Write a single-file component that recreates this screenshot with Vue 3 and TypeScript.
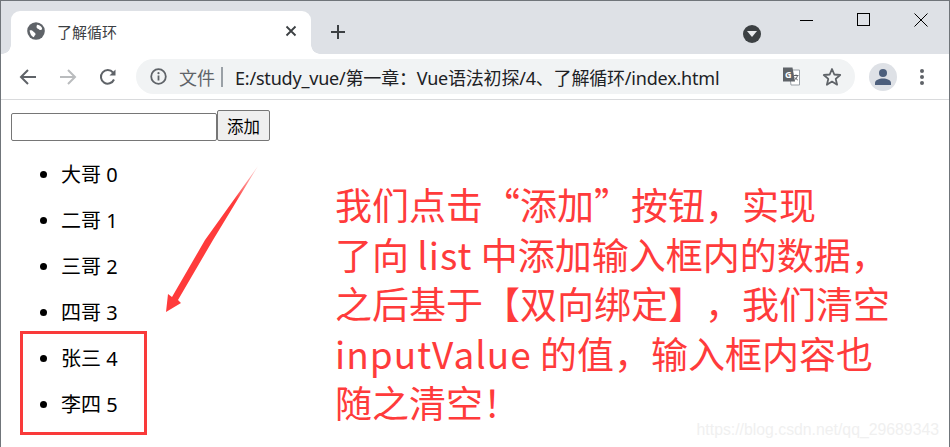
<script setup lang="ts">
const items = ['大哥 0', '二哥 1', '三哥 2', '四哥 3', '张三 4', '李四 5']
</script>

<template>
  <div class="window">
    <div class="tabstrip">
      <div class="tab">
        <svg class="globe" width="18" height="18" viewBox="0 0 18 18">
          <circle cx="9" cy="9" r="8.800" fill="#5f6368" />
          <path d="M10 2.800c1.800.1 3.600 1 4.600 2.500.8 1.200.7 2.500-.6 2.700-1.500.2-2.200-1-3.200-1.300-.9-.3-1.500-1.500-1.200-2.500zM2.600 8.500c1.300-.6 2.700 0 3.700 1 1 1 2.200 1.300 2.200 2.700 0 1-.9 1.200-1.300 2.300-.2.500-.5.900-1 .6-2-1.200-3.300-3.700-3.600-6.600z" fill="#fff" />
        </svg>
        <span class="tab-title">了解循环</span>
        <svg class="tab-close" width="12" height="12" viewBox="0 0 12 12">
          <path d="M1.500 1.500l9 9M10.500 1.500l-9 9" stroke="#3c4043" stroke-width="1.800" fill="none" />
        </svg>
      </div>
      <svg class="new-tab" width="16" height="16" viewBox="0 0 16 16">
        <path d="M8 1v14M1 8h14" stroke="#3c4043" stroke-width="2" fill="none" />
      </svg>
      <div class="strip-spacer"></div>
      <div class="profile-drop"><span></span></div>
      <div class="win-controls">
        <svg width="14" height="14" viewBox="0 0 14 14"><path d="M0 7.500h13" stroke="#000" fill="none" /></svg>
        <svg width="14" height="14" viewBox="0 0 14 14"><rect x=".5" y=".5" width="12" height="12" stroke="#000" fill="none" /></svg>
        <svg width="14" height="14" viewBox="0 0 14 14"><path d="M.5.500l13 13M13.500.500l-13 13" stroke="#000" fill="none" /></svg>
      </div>
    </div>

    <div class="toolbar">
      <svg class="nav" width="18" height="18" viewBox="0 0 18 18">
        <path d="M17 9H2M9 2 2 9l7 7" stroke="#5f6368" stroke-width="2" fill="none" />
      </svg>
      <svg class="nav" width="18" height="18" viewBox="0 0 18 18">
        <path d="M1 9h15M9 2l7 7-7 7" stroke="#babcbe" stroke-width="2" fill="none" />
      </svg>
      <svg class="nav" width="18" height="18" viewBox="0 0 18 18">
        <path d="M15 11.500A6.800 6.800 0 1 1 14 4.500" stroke="#5f6368" stroke-width="2" fill="none" />
        <path d="M16.500 1.500v6h-6z" fill="#5f6368" />
      </svg>
      <div class="omnibox">
        <svg class="info" width="17" height="17" viewBox="0 0 17 17">
          <circle cx="8.500" cy="8.500" r="7.300" stroke="#5f6368" stroke-width="1.800" fill="none" />
          <path d="M8.500 7.500v5" stroke="#5f6368" stroke-width="1.800" />
          <circle cx="8.500" cy="5.200" r="1.100" fill="#5f6368" />
        </svg>
        <span class="scheme">文件</span>
        <span class="sep"></span>
        <span class="url">E:/study_vue/第一章：Vue语法初探/4、了解循环/index.html</span>
        <svg class="translate" width="19" height="19" viewBox="0 0 19 19">
          <path d="M7 3h10.500v15H9z" fill="#fff" stroke="#9aa0a6" />
          <path d="M1 .500h9.500L13 14.500H1z" fill="#5f6368" />
          <text x="3" y="11" class="g-mark">G</text>
          <path d="M12 8.500h4.500M14 7.500v1M15.500 8.500c-.5 2-1.500 3.500-3 4.500M13 10.500c.7 1 1.500 2 2.800 2.500" stroke="#5f6368" fill="none" />
        </svg>
        <svg class="star" width="20" height="19" viewBox="0 0 20 19">
          <path d="M10 2l2.300 5.500 5.900.5-4.500 3.900 1.400 5.800L10 14.600l-5.100 3.100 1.400-5.800L1.800 8l5.900-.5z" stroke="#5f6368" stroke-width="1.800" stroke-linejoin="round" fill="none" />
        </svg>
      </div>
      <div class="avatar">
        <svg width="16" height="16" viewBox="0 0 16 16">
          <circle cx="8" cy="4" r="4" fill="#4d5f7c" />
          <path d="M0 16v-2c0-3 4-4.500 8-4.500s8 1.500 8 4.500v2z" fill="#4d5f7c" />
        </svg>
      </div>
      <svg class="menu" width="4" height="16" viewBox="0 0 4 16">
        <circle cx="2" cy="2" r="2" fill="#5f6368" />
        <circle cx="2" cy="8" r="2" fill="#5f6368" />
        <circle cx="2" cy="14" r="2" fill="#5f6368" />
      </svg>
    </div>

    <div class="page">
      <div class="form-row">
        <input class="text-input" type="text" />
        <button class="add-btn" type="button">添加</button>
      </div>
      <ul class="list">
        <li v-for="item in items" :key="item">{{ item }}</li>
      </ul>

      <!-- annotations drawn over the page -->
      <svg class="arrow" width="100" height="150" viewBox="0 0 100 150">
        <defs>
          <linearGradient id="arrowFade" gradientUnits="userSpaceOnUse" x1="93" y1="1" x2="70" y2="36">
            <stop offset="0" stop-color="#ff3b3b" stop-opacity=".2" />
            <stop offset="1" stop-color="#ff3b3b" />
          </linearGradient>
        </defs>
        <path d="M93 1 48 75 13 135 16 138 1 147 3 129 7 132 40 75z" fill="url(#arrowFade)" />
      </svg>
      <div class="red-box"></div>
      <div class="note">
        <div>我们点击“添加”按钮，实现</div>
        <div>了向 <span class="latin">list</span> 中添加输入框内的数据，</div>
        <div>之后基于【双向绑定】，我们清空</div>
        <div><span class="latin">inputValue</span> 的值，输入框内容也</div>
        <div>随之清空！</div>
      </div>
      <div class="watermark">https://blog.csdn.net/qq_29689343</div>
    </div>
  </div>
</template>

<style>
html,
body {
  margin: 0;
  background: #fff;
}
</style>

<style scoped>
.window {
  width: 950px;
  height: 447px;
  box-sizing: border-box;
  border: 1px solid #70757a;
  border-bottom: 0;
  overflow: hidden;
  display: flex;
  flex-direction: column;
  font-family: "Noto Sans", "Noto Sans CJK SC", sans-serif;
}

.tabstrip {
  height: 53px;
  flex: none;
  display: flex;
  align-items: flex-end;
  background: #dee1e6;
  padding-left: 10px;
}

.tab {
  position: relative;
  width: 300px;
  height: 43px;
  box-sizing: border-box;
  padding: 0 15px 3px 16px;
  display: flex;
  align-items: center;
  background: #fff;
  border-radius: 9px 9px 0 0;
}

/* the curved feet of the active tab */
.tab::before,
.tab::after {
  content: "";
  position: absolute;
  bottom: 0;
  width: 9px;
  height: 9px;
}

.tab::before {
  left: -9px;
  background: radial-gradient(circle at 0 0, #dee1e6 8.500px, #fff 9px);
}

.tab::after {
  right: -9px;
  background: radial-gradient(circle at 100% 0, #dee1e6 8.500px, #fff 9px);
}

.tab-title {
  margin-left: 12px;
  font-size: 15px;
  color: #3c4043;
  flex: 1;
}

.tab-close {
  margin: 0 0 1px;
  position: relative;
  left: 1px;
}

.new-tab {
  margin: 0 0 14px 19px;
}

.strip-spacer {
  flex: 1;
}

.profile-drop {
  width: 18px;
  height: 18px;
  border-radius: 50%;
  background: #3c4043;
  margin: 0 0 11px 0;
  display: flex;
  align-items: center;
  justify-content: center;
}

.profile-drop span {
  width: 0;
  height: 0;
  border-left: 5px solid transparent;
  border-right: 5px solid transparent;
  border-top: 6px solid #e8eaed;
}

.win-controls {
  align-self: flex-start;
  width: 188px;
  box-sizing: border-box;
  margin-left: 0;
  padding: 12px 21px 0 0;
  display: flex;
  justify-content: flex-end;
  gap: 43px;
}

.toolbar {
  height: 46px;
  flex: none;
  box-sizing: border-box;
  display: flex;
  align-items: center;
  padding: 0 0 0 18px;
  background: #fff;
  border-bottom: 1px solid #d9dadc;
}

.nav {
  margin-right: 22px;
}

.omnibox {
  width: 719px;
  height: 35px;
  box-sizing: border-box;
  margin-left: -3px;
  padding: 0 13px 0 14px;
  display: flex;
  align-items: center;
  background: #f1f3f4;
  border-radius: 18px;
}

.scheme {
  margin-left: 12px;
  font-size: 18px;
  color: #5f6368;
}

.sep {
  width: 2px;
  height: 20px;
  margin: 0 12px 0 6px;
  background: #9aa0a6;
}

.url {
  flex: 1;
  font-size: 18px;
  letter-spacing: -0.2px;
  color: #202124;
  white-space: nowrap;
}

.g-mark {
  font-size: 9px;
  font-weight: 700;
  fill: #fff;
}

.translate {
  margin-right: 21px;
}

.avatar {
  width: 28px;
  height: 28px;
  margin-left: 14px;
  border-radius: 50%;
  background: #dee1e6;
  display: flex;
  align-items: center;
  justify-content: center;
}

.menu {
  margin-left: 23px;
}

.page {
  position: relative;
  flex: 1;
  background: #fff;
}

.form-row {
  display: flex;
  align-items: flex-end;
  padding: 10px 0 0 10px;
  font-size: 16px;
}

.text-input {
  width: 206px;
  height: 28px;
  box-sizing: border-box;
  margin: 0;
  padding: 1px 2px;
  border: 1px solid #767676;
  border-radius: 2px;
  background: #fff;
}

.add-btn {
  width: 53px;
  height: 31px;
  box-sizing: border-box;
  margin: 0;
  padding: 0;
  border: 1px solid #767676;
  border-radius: 2px;
  background: #efefef;
  color: #000;
  font: 16.500px "Noto Sans CJK SC", sans-serif;
}

.list {
  margin: 11px 0 0;
  padding: 0 0 0 60px;
  font-size: 20px;
  color: #000;
}

.list li {
  height: 46px;
  line-height: 46px;
}

.arrow {
  position: absolute;
  left: 164px;
  top: 65px;
}

.red-box {
  position: absolute;
  left: 19px;
  top: 231px;
  width: 127px;
  height: 104px;
  border: 3px solid #f93a3a;
  box-sizing: border-box;
}

.note {
  position: absolute;
  left: 334px;
  top: 80px;
  font-family: "Noto Sans CJK SC", sans-serif;
  font-size: 37px;
  line-height: 49.500px;
  text-spacing-trim: space-all;
  color: #ff3b3b;
  white-space: nowrap;
}

.latin {
  letter-spacing: 1px;
}

.watermark {
  position: absolute;
  right: 10px;
  bottom: 8px;
  font: 15.800px "Liberation Sans", sans-serif;
  color: #f0f0f0;
  white-space: nowrap;
}
</style>
